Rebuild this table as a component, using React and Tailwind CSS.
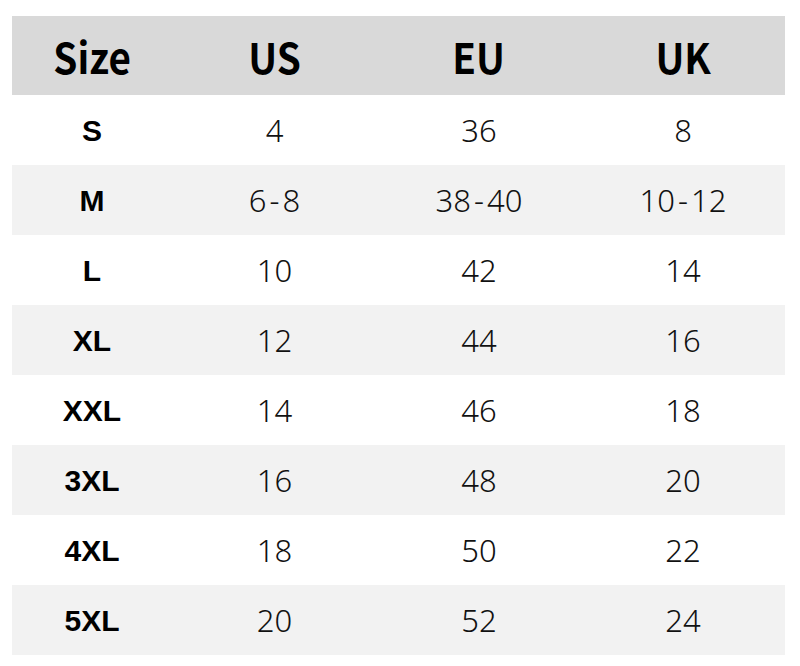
export default function App() {
  const rows = [
    ["S", "4", "36", "8"],
    ["M", "6-8", "38-40", "10-12"],
    ["L", "10", "42", "14"],
    ["XL", "12", "44", "16"],
    ["XXL", "14", "46", "18"],
    ["3XL", "16", "48", "20"],
    ["4XL", "18", "50", "22"],
    ["5XL", "20", "52", "24"],
  ];
  const Val = ({ v }) => {
    const parts = v.split("-");
    if (parts.length === 1) return <div>{v}</div>;
    return (
      <div>
        {parts[0]}
        <span className="mx-[3px]">-</span>
        {parts[1]}
      </div>
    );
  };
  const heads = ["Size", "US", "EU", "UK"];
  return (
    <div className="w-[800px] h-[666px] bg-white pt-[16px] pl-[12px]">
      <div className="w-[773px]">
        <div className="grid grid-cols-[160px_205px_204px_204px] h-[79px] bg-[#d9d9d9] items-center text-center text-[42px] font-bold text-black font-['Noto_Sans_CJK_SC',sans-serif]">
          {heads.map((h) => (
            <div key={h}>
              <span className="inline-block scale-x-[0.92]">{h}</span>
            </div>
          ))}
        </div>
        {rows.map((r, i) => (
          <div
            key={r[0]}
            className={
              "grid grid-cols-[160px_205px_204px_204px] h-[70px] items-center text-center text-[31px] text-[#111] font-['Noto_Sans',sans-serif] font-light " +
              (i % 2 === 1 ? "bg-[#f2f2f2]" : "bg-white")
            }
          >
            <div className="font-bold text-black text-[30px] font-['Liberation_Sans',sans-serif]">{r[0]}</div>
            <Val v={r[1]} />
            <Val v={r[2]} />
            <Val v={r[3]} />
          </div>
        ))}
      </div>
    </div>
  );
}
